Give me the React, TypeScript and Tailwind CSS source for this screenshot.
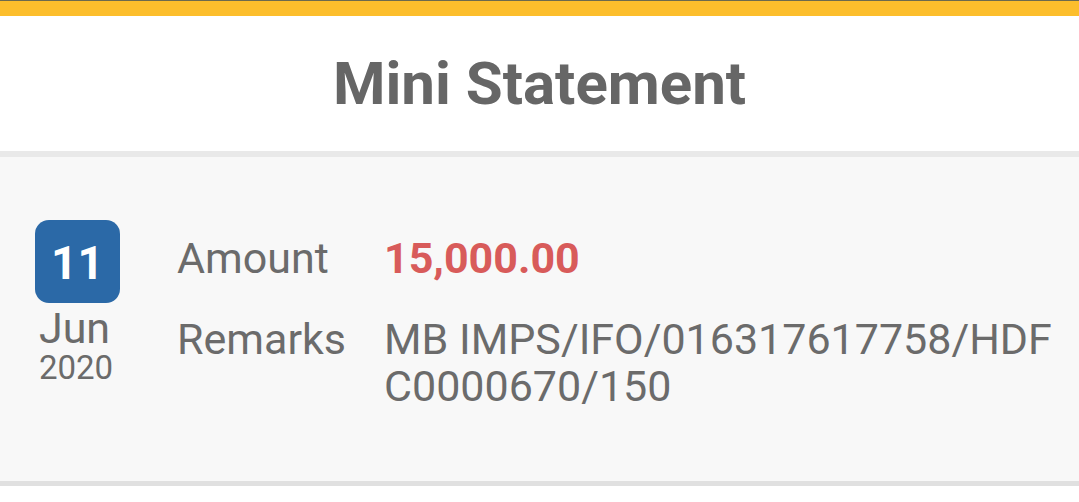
export default function App() {
  return (
    <div className="w-full min-h-screen bg-white font-['Roboto',sans-serif]">
      <div className="h-px bg-[#6c6a4e]" />
      <div className="h-[15px] bg-[#fcbe2c]" />
      <header className="h-[135px] flex items-center justify-center">
        <h1 className="text-[60px] font-bold text-[#666666] leading-none">Mini Statement</h1>
      </header>
      <div className="h-[6px] bg-[#e9e9e9]" />
      <section className="h-[324px] bg-[#f8f8f8] flex items-start pl-[35px] pt-[63px]">
        <div className="w-[85px] flex flex-col items-center">
          <div className="w-[85px] h-[83px] rounded-[14px] bg-[#2b69a7] flex items-center justify-center pt-[2px]">
            <span className="text-white font-bold text-[46px] leading-none">11</span>
          </div>
          <span className="mt-[4px] text-[43px] leading-[43px] text-[#6b6b6b] -ml-[6px]">Jun</span>
          <span className="mt-[1px] text-[33px] leading-[33px] text-[#6b6b6b] -ml-[3px]">2020</span>
        </div>
        <div className="ml-[57px] mt-[15px] grid grid-cols-[207px_1fr] gap-y-[34px] text-[43px] leading-[47px] text-[#6b6b6b] pr-[10px]">
          <span>Amount</span>
          <span className="font-bold text-[#d85b5a]">15,000.00</span>
          <span>Remarks</span>
          <span className="break-all">MB IMPS/IFO/016317617758/HDFC0000670/150</span>
        </div>
      </section>
      <div className="h-[5px] bg-[#e0e0e0]" />
    </div>
  );
}
